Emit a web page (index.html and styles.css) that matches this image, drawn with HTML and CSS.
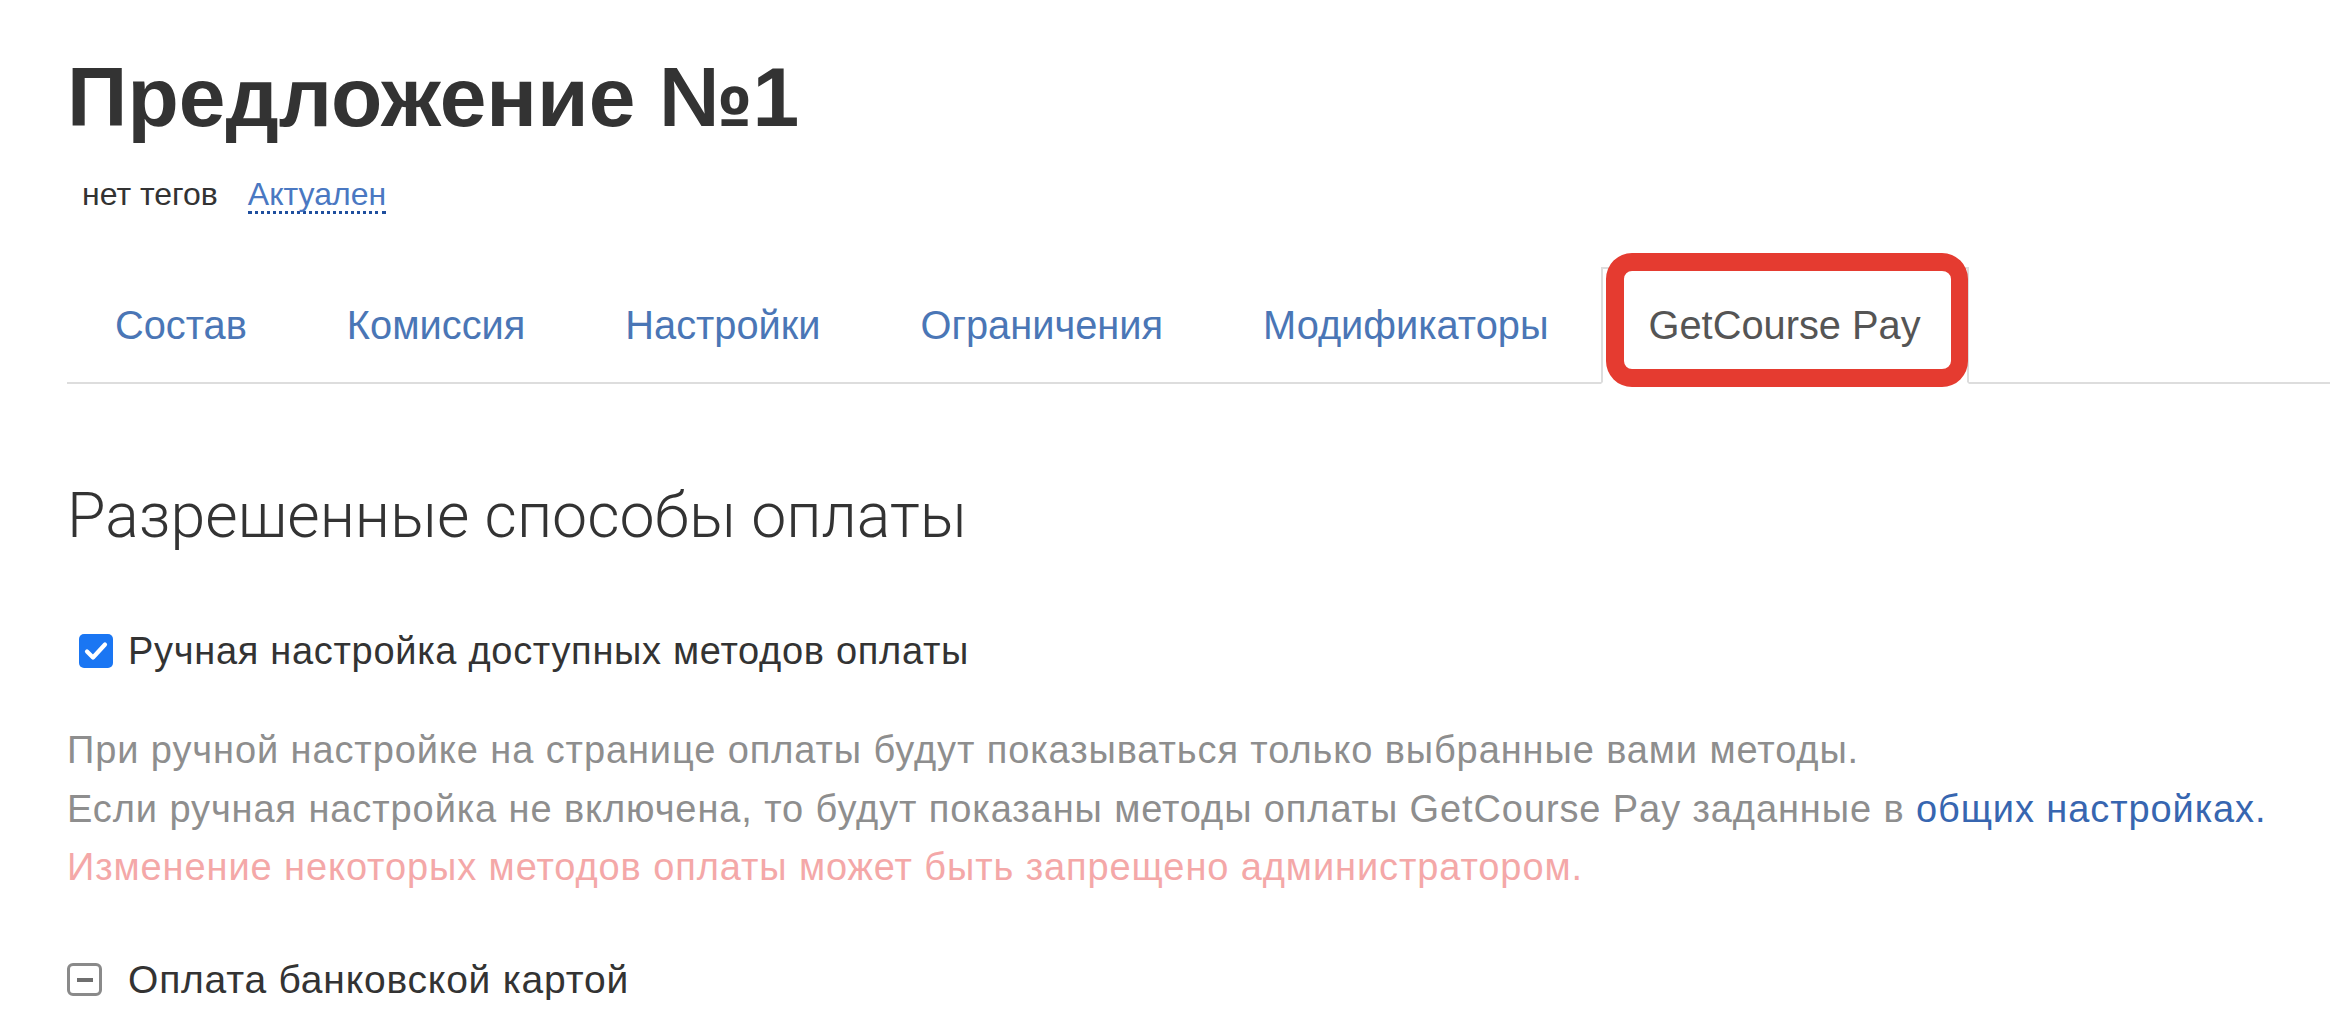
FILE: index.html
```html
<!DOCTYPE html>
<html lang="ru">
<head>
<meta charset="utf-8">
<title>Предложение №1</title>
<link rel="stylesheet" href="styles.css">
</head>
<body>
<div class="page">
  <h1 class="title">Предложение №1</h1>
  <div class="meta">
    <span class="tags">нет тегов</span>
    <a class="status" href="#">Актуален</a>
  </div>
  <ul class="tabs">
    <li class="tab"><a href="#">Состав</a></li>
    <li class="tab"><a href="#">Комиссия</a></li>
    <li class="tab"><a href="#">Настройки</a></li>
    <li class="tab"><a href="#">Ограничения</a></li>
    <li class="tab"><a href="#">Модификаторы</a></li>
    <li class="tab active"><a href="#">GetCourse Pay</a><span class="highlight"></span></li>
  </ul>
  <h2 class="section-title">Разрешенные способы оплаты</h2>
  <label class="check-row">
    <span class="checkbox"><svg viewBox="0 0 34 34" width="34" height="34"><path d="M8 17.5 L14 23.5 L26 10.5" fill="none" stroke="#fff" stroke-width="4.2" stroke-linecap="round" stroke-linejoin="round"/></svg></span>
    <span class="check-label">Ручная настройка доступных методов оплаты</span>
  </label>
  <div class="hint">
    <p>При ручной настройке на странице оплаты будут показываться только выбранные вами методы.</p>
    <p>Если ручная настройка не включена, то будут показаны методы оплаты GetCourse Pay заданные в <a href="#">общих настройках.</a></p>
    <p class="warn">Изменение некоторых методов оплаты может быть запрещено администратором.</p>
  </div>
  <div class="group-row">
    <span class="collapse-icon"><span class="minus"></span></span>
    <span class="group-label">Оплата банковской картой</span>
  </div>
</div>
</body>
</html>
```

FILE: styles.css
```css
html, body {
  margin: 0;
  padding: 0;
  background: #fff;
}
body {
  font-family: "Liberation Sans", Arial, sans-serif;
  color: #333;
  overflow: hidden;
}
.page {
  padding-left: 67px;
}
.title {
  margin: 51px 0 0 0;
  font-size: 84px;
  line-height: 92px;
  font-weight: bold;
  color: #333;
}
.meta {
  margin-top: 31px;
  height: 40px;
  display: flex;
  align-items: baseline;
  font-size: 32px;
  line-height: 40px;
}
.tags {
  margin-left: 15px;
  color: #333;
}
.status {
  margin-left: 30px;
  color: #4a78c2;
  text-decoration: none;
  border-bottom: 3px dotted #1f4f9e;
  line-height: 34px;
}
.tabs {
  list-style: none;
  margin: 53px 0 0 0;
  padding: 0;
  display: flex;
  border-bottom: 2px solid #dddddd;
}
.tab {
  position: relative;
  margin-right: 4px;
  margin-bottom: -2px;
  border: 2px solid transparent;
  border-bottom: 0;
}
.tab a {
  display: block;
  padding: 33px 46px 36px 46px;
  font-size: 39.8px;
  line-height: 46px;
  color: #4a76b6;
  text-decoration: none;
}
.tab.active {
  background: #fff;
  border-color: #dddddd;
  border-bottom: 2px solid #fff;
}
.tab.active a {
  color: #555;
  padding-bottom: 34px;
}
.highlight {
  position: absolute;
  left: 3px;
  top: -16px;
  width: 327px;
  height: 98px;
  border: 18px solid #e53b30;
  border-right-width: 17px;
  border-radius: 26px;
}
.section-title {
  margin: 97px 0 0 0;
  font-family: "Roboto", "Liberation Sans", sans-serif;
  font-weight: 300;
  font-size: 62.6px;
  line-height: 70px;
  color: #333;
}
.check-row {
  margin-top: 80px;
  display: flex;
  align-items: center;
  height: 40px;
}
.checkbox {
  margin-left: 12px;
  width: 34px;
  height: 34px;
  border-radius: 5px;
  background: #1a76f3;
  display: flex;
}
.check-label {
  margin-left: 15px;
  font-size: 38px;
  letter-spacing: 0.7px;
  line-height: 40px;
  color: #333;
}
.hint {
  margin-top: 50px;
  font-size: 38px;
  letter-spacing: 0.9px;
  line-height: 58.5px;
  color: #8e8e8e;
}
.hint p {
  margin: 0;
}
.hint a {
  color: #3766b0;
  text-decoration: none;
}
.hint .warn {
  color: #f4a8a8;
}
.group-row {
  margin-top: 63px;
  display: flex;
  align-items: center;
  height: 40px;
}
.collapse-icon {
  width: 29px;
  height: 27px;
  border: 3px solid #8a8a8a;
  border-radius: 6px;
  display: flex;
  align-items: center;
  justify-content: center;
}
.minus {
  width: 16px;
  height: 4px;
  background: #6f6f6f;
}
.group-label {
  margin-left: 26px;
  font-size: 39px;
  letter-spacing: 0.8px;
  line-height: 40px;
  color: #333;
}
```
